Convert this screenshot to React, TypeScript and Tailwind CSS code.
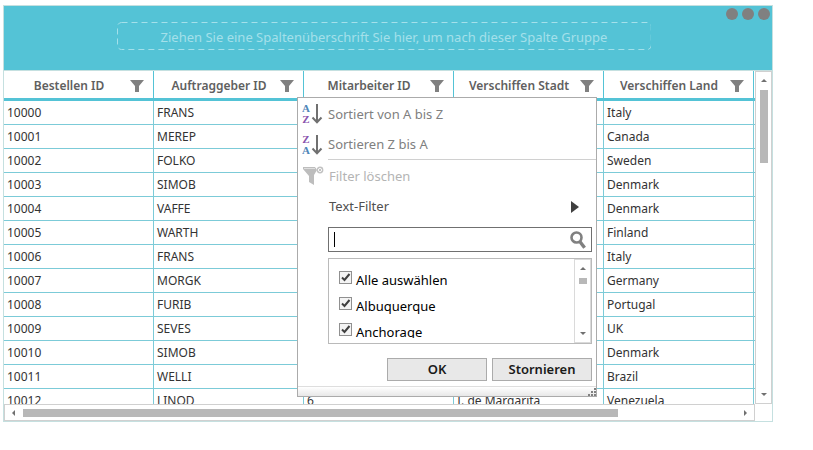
import React from "react";

type Row = [string, string, string, string, string];

const columns = ["Bestellen ID", "Auftraggeber ID", "Mitarbeiter ID", "Verschiffen Stadt", "Verschiffen Land"];

const rows: Row[] = [
  ["10000", "FRANS", "", "", "Italy"],
  ["10001", "MEREP", "", "", "Canada"],
  ["10002", "FOLKO", "", "", "Sweden"],
  ["10003", "SIMOB", "", "", "Denmark"],
  ["10004", "VAFFE", "", "", "Denmark"],
  ["10005", "WARTH", "", "", "Finland"],
  ["10006", "FRANS", "", "", "Italy"],
  ["10007", "MORGK", "", "", "Germany"],
  ["10008", "FURIB", "", "", "Portugal"],
  ["10009", "SEVES", "", "", "UK"],
  ["10010", "SIMOB", "", "", "Denmark"],
  ["10011", "WELLI", "", "", "Brazil"],
  ["10012", "LINOD", "6", "I. de Margarita", "Venezuela"],
];

const cities = ["Alle auswählen", "Albuquerque", "Anchorage"];

function Funnel() {
  return (
    <svg width="14" height="12" viewBox="0 0 14 12" className="block" fill="#808080" aria-hidden="true">
      <path d="M0 0H14L9 6V12H5V6Z" />
    </svg>
  );
}

function Triangle({ dir }: { dir: "up" | "down" | "left" | "right" }) {
  const vertical = dir === "up" || dir === "down";
  const d = {
    up: "M0 3L3 0L6 3Z",
    down: "M0 0H6L3 3Z",
    left: "M3 0V6L0 3Z",
    right: "M0 0L3 3L0 6Z",
  }[dir];
  return (
    <svg width={vertical ? 6 : 3} height={vertical ? 3 : 6} className="block" fill="#707070" aria-hidden="true">
      <path d={d} />
    </svg>
  );
}

function SortIcon({ first, second }: { first: string; second: string }) {
  const colour = (letter: string) => (letter === "A" ? "#4f86b8" : "#8a55ad");
  return (
    <svg width="22" height="22" viewBox="0 0 22 22" className="block" aria-hidden="true">
      <g fontFamily="'Liberation Serif', serif" fontWeight="bold" fontSize="11" textAnchor="middle">
        <text x="4" y="9" fill={colour(first)}>{first}</text>
        <text x="4" y="20" fill={colour(second)}>{second}</text>
      </g>
      <path d="M15 1V19M10.5 14.5L15 19.2L19.5 14.5" fill="none" stroke="#707070" strokeWidth="2" />
    </svg>
  );
}

function ClearFilterIcon() {
  return (
    <svg width="22" height="22" viewBox="0 0 22 22" className="block" aria-hidden="true">
      <path d="M0 2H12L14 5L11 10V20L6 17V11L0 4Z" fill="#bdbdbd" />
      <path d="M1 3.5H12" stroke="#dedede" />
      <circle cx="17" cy="5" r="2.7" fill="white" stroke="#c2c2c2" strokeWidth="1.4" />
      <path d="M15.5 3.5L18.5 6.5M18.5 3.5L15.5 6.5" stroke="#c2c2c2" strokeWidth="1" />
    </svg>
  );
}

function SearchIcon() {
  return (
    <svg width="17" height="18" viewBox="0 0 17 18" className="block" fill="none" stroke="#808080" aria-hidden="true">
      <circle cx="6.5" cy="6.5" r="5" strokeWidth="2.6" />
      <path d="M9.8 10.5L14.6 16.8" strokeWidth="3.4" />
    </svg>
  );
}

function FilterPopup() {
  return (
    <div
      role="dialog"
      aria-label="Filter"
      className="absolute left-[293px] top-[91px] flex w-[300px] flex-col border border-[#ababab] bg-white text-[13px] text-[#808080]"
    >
      <button type="button" className="flex h-[31px] items-center gap-1 pl-1">
        <SortIcon first="A" second="Z" />
        <span className="flex h-full flex-1 items-center pt-[2px]">Sortiert von A bis Z</span>
      </button>
      <button type="button" className="flex h-[31px] items-center gap-1 pl-1">
        <SortIcon first="Z" second="A" />
        <span className="flex h-full flex-1 items-center border-b border-[#d0d0d0] pt-[2px]">Sortieren Z bis A</span>
      </button>
      <button type="button" disabled className="flex h-[31px] items-center gap-1 pl-[5px] text-[#b4b4b4]">
        <ClearFilterIcon />
        <span className="flex h-full flex-1 items-center pt-[2px]">Filter löschen</span>
      </button>
      <button type="button" className="flex h-[31px] items-center justify-between pl-[31px] pr-[17px] text-[#505050]">
        <span>Text-Filter</span>
        <svg width="8" height="12" className="block" fill="#404040" aria-hidden="true">
          <path d="M0 0L8 6L0 12Z" />
        </svg>
      </button>

      <div className="flex flex-col gap-[6px] pb-[5px] pl-[30px] pr-1 pt-[5px]">
        <div className="relative flex h-[25px] items-center border border-[#707070] pr-1">
          <input
            type="text"
            aria-label="Suchen"
            className="h-full min-w-0 flex-1 pl-[5px] text-black caret-transparent outline-none"
          />
          <span className="absolute left-[5px] top-1 h-[15px] w-px bg-black" />
          <SearchIcon />
        </div>

        <div className="flex h-[86px] border border-[#bababa] text-black">
          <div className="mb-[5px] flex flex-1 flex-col overflow-hidden pl-[10px] pt-2">
            {cities.map((city) => (
              <label key={city} className="flex h-[26px] shrink-0 items-start gap-1 pt-1">
                <span className="relative flex">
                  <input
                    type="checkbox"
                    defaultChecked
                    className="peer size-[13px] appearance-none border border-[#909090] bg-[#f4f4f4]"
                  />
                  <svg
                    viewBox="0 0 13 13"
                    className="pointer-events-none absolute inset-0 hidden size-[13px] peer-checked:block"
                    fill="none"
                    stroke="#404040"
                    strokeWidth="2"
                    aria-hidden="true"
                  >
                    <path d="M3 6.5L5.5 9L10.5 3" />
                  </svg>
                </span>
                <span className="leading-[18px]">{city}</span>
              </label>
            ))}
          </div>
          <div className="flex w-[17px] flex-col items-center border border-[#dadada] pb-[7px] pt-[7px]">
            <Triangle dir="up" />
            <span className="mt-[8px] h-[6px] w-[8px] bg-[#b8b8b8]" />
            <span className="flex-1" />
            <Triangle dir="down" />
          </div>
        </div>

        <div className="flex justify-end gap-[5px] pt-2 font-semibold text-[#1a1a1a]">
          <button type="button" className="h-[23px] w-[100px] border border-[#ababab] bg-[#e8e8e8] leading-[21px]">
            OK
          </button>
          <button type="button" className="h-[23px] w-[100px] border border-[#ababab] bg-[#e8e8e8] leading-[21px]">
            Stornieren
          </button>
        </div>
      </div>

      <div className="flex h-[10px] items-end justify-end border-t border-[#dedede] bg-linear-to-b from-white to-[#e8e8e8]">
        <svg width="8" height="8" className="block" fill="#808080" aria-hidden="true">
          <path d="M6 0h2v2H6zM3 3h2v2H3zM6 3h2v2H6zM0 6h2v2H0zM3 6h2v2H3zM6 6h2v2H6z" />
        </svg>
      </div>
    </div>
  );
}

export default function App() {
  return (
    <main className="bg-white pb-[28px] pl-[3px] pr-10 pt-[5px] font-['Noto_Sans','Open_Sans',sans-serif]">
      <div className="relative border border-[#c5e0e0]">
        <div className="flex h-[65px] items-start justify-center border-b border-[#c5e0e0] bg-[#54c3d6] pr-2 pt-4">
          <div className="relative flex h-[28px] items-center justify-center px-11 pt-[3px] text-[13px] text-[#a4e0ea]">
            <svg className="absolute inset-0 size-full" fill="none" stroke="#a4e0ea" aria-hidden="true">
              <rect x="0.5" y="0.5" width="99.8%" height="27" rx="4" strokeDasharray="6 4" />
            </svg>
            Ziehen Sie eine Spaltenüberschrift Sie hier, um nach dieser Spalte Gruppe
          </div>
        </div>
        <div className="absolute right-[2px] top-[2px] flex gap-[4px]">
          <button type="button" aria-label="Minimieren" className="size-[12px] rounded-full bg-[#808080]" />
          <button type="button" aria-label="Maximieren" className="size-[12px] rounded-full bg-[#808080]" />
          <button type="button" aria-label="Schließen" className="size-[12px] rounded-full bg-[#808080]" />
        </div>

        <div className="flex h-[333px]">
          <div className="min-w-0 flex-1 overflow-hidden">
            <table className="w-full table-fixed border-separate border-spacing-0">
              <thead>
                <tr className="h-[30px]">
                  {columns.map((name) => (
                    <th
                      key={name}
                      scope="col"
                      className="border-b-[3px] border-r border-b-[#54c3d6] border-r-[#54c3d6] p-0 text-xs font-semibold text-[#606060]"
                    >
                      <div className="flex items-center pl-1 pr-[9px] pt-[2px]">
                        <span className="flex-1 whitespace-nowrap text-center">{name}</span>
                        <button type="button" aria-label={`${name} filtern`}>
                          <Funnel />
                        </button>
                      </div>
                    </th>
                  ))}
                  <td className="w-px border-b-[3px] border-[#54c3d6] p-0" />
                </tr>
              </thead>
              <tbody>
                {rows.map((row) => (
                  <tr key={row[0]} className="h-6">
                    {row.map((value, i) => (
                      <td
                        key={columns[i]}
                        className="whitespace-nowrap border-b border-r border-[#7ccbd8] p-0 pl-[3px] text-xs text-[#333333]"
                      >
                        {value}
                      </td>
                    ))}
                    <td className="border-b border-[#7ccbd8] p-0" />
                  </tr>
                ))}
              </tbody>
            </table>
          </div>
          <div className="flex w-[17px] flex-col items-center border border-[#d0d0d0] py-[7px]">
            <Triangle dir="up" />
            <span className="mt-2 h-[73px] w-[8px] bg-[#b8b8b8]" />
            <span className="flex-1" />
            <Triangle dir="down" />
          </div>
        </div>

        <div className="mr-[17px] flex h-[17px] items-center border border-[#d0d0d0] px-[7px]">
          <Triangle dir="left" />
          <span className="ml-2 h-[8px] w-[81%] bg-[#b8b8b8]" />
          <span className="flex-1" />
          <Triangle dir="right" />
        </div>

        <FilterPopup />
      </div>
    </main>
  );
}
